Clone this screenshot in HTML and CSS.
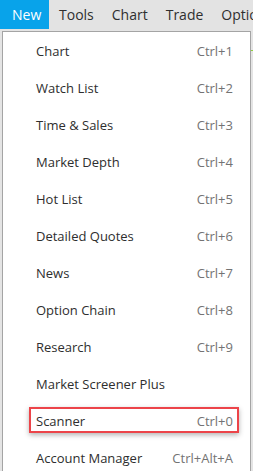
FILE: index.html
```html
<!DOCTYPE html>
<html>
<head>
<meta charset="utf-8">
<link rel="stylesheet" href="styles.css">
</head>
<body>
<div class="app">
  <div class="menubar">
    <div class="tab active">New</div>
    <div class="tab">Tools</div>
    <div class="tab">Chart</div>
    <div class="tab">Trade</div>
    <div class="tab">Options</div>
  </div>
  <div class="workspace">
    <div class="dropdown">
      <div class="item"><span class="label">Chart</span><span class="key">Ctrl+1</span></div>
      <div class="item"><span class="label">Watch List</span><span class="key">Ctrl+2</span></div>
      <div class="item"><span class="label">Time &amp; Sales</span><span class="key">Ctrl+3</span></div>
      <div class="item"><span class="label">Market Depth</span><span class="key">Ctrl+4</span></div>
      <div class="item"><span class="label">Hot List</span><span class="key">Ctrl+5</span></div>
      <div class="item"><span class="label">Detailed Quotes</span><span class="key">Ctrl+6</span></div>
      <div class="item"><span class="label">News</span><span class="key">Ctrl+7</span></div>
      <div class="item"><span class="label">Option Chain</span><span class="key">Ctrl+8</span></div>
      <div class="item"><span class="label">Research</span><span class="key">Ctrl+9</span></div>
      <div class="item"><span class="label">Market Screener Plus</span><span class="key"></span></div>
      <div class="item highlight"><span class="label">Scanner</span><span class="key">Ctrl+0</span></div>
      <div class="item"><span class="label">Account Manager</span><span class="key">Ctrl+Alt+A</span></div>
    </div>
    <div class="side"><span class="tick"></span></div>
  </div>
</div>
</body>
</html>
```
FILE: styles.css
```css
html, body {
  margin: 0;
  padding: 0;
  background: #e4e4e4;
  overflow: hidden;
}
.app {
  width: 253px;
  height: 471px;
  font-family: "Open Sans", "Noto Sans", sans-serif;
  overflow: hidden;
}
.menubar {
  display: flex;
  height: 30px;
  background: #e3e3e3;
  white-space: nowrap;
  overflow: hidden;
}
.tab {
  flex: none;
  font-size: 14px;
  line-height: 29px;
  padding: 0 8px 0 10px;
  color: #2f2f2f;
  height: 29px;
}
.tab.active {
  background: #08a3ea;
  color: #ffffff;
  width: 49px;
  box-sizing: border-box;
  padding: 0 0 0 12px;
}
.workspace {
  display: flex;
  padding-top: 1px;
}
.dropdown {
  flex: none;
  margin-left: 2px;
  width: 247px;
  background: #ffffff;
  border: 1px solid #a4a4a4;
  border-bottom: none;
  display: flex;
  flex-direction: column;
  height: 460px;
}
.item {
  position: relative;
  height: 37px;
  flex: none;
  display: flex;
  align-items: center;
  justify-content: space-between;
  padding: 0 17px 0 33px;
  font-size: 13px;
  color: #2e2e2e;
}
.key {
  color: #737373;
}
.item.highlight::after {
  content: "";
  position: absolute;
  left: 26px;
  right: 11px;
  top: 5px;
  bottom: 6px;
  border: 2px solid #ec4449;
  box-shadow: 0 2px 5px rgba(0, 0, 0, 0.3);
}
.side {
  flex: 1;
  position: relative;
}
.tick {
  position: absolute;
  left: 0;
  top: 19px;
  width: 2px;
  height: 1px;
  background: #8fcf3f;
}
```
